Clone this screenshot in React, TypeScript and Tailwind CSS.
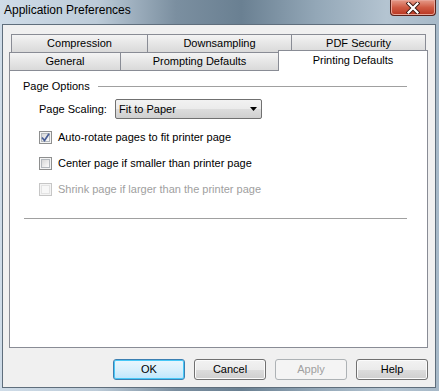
const tabBg = "bg-gradient-to-b from-[#f4f4f4] via-[#e6e6e6] to-[#d9d9d9]";

function Tab({ label, w, first }: { label: string; w: string; first?: boolean }) {
  return (
    <div
      className={`${w} h-full flex items-center justify-center border-t border-r border-[#898c95] ${
        first ? "border-l" : ""
      } ${tabBg} text-black`}
    >
      {label}
    </div>
  );
}

function Check({ checked, disabled }: { checked?: boolean; disabled?: boolean }) {
  return (
    <span
      className={`w-[13px] h-[13px] flex p-px border bg-[#f4f4f4] ${
        disabled ? "border-[#c6c6c6]" : "border-[#8e8f8f]"
      }`}
    >
      <span
        className={`flex-1 flex items-center justify-center border ${
          disabled
            ? "border-[#e3e3e3] bg-[#f7f7f7]"
            : "border-[#b3b8bd] bg-gradient-to-br from-[#d8d8d8] to-[#fbfbfb]"
        }`}
      >
        {checked && (
          <svg width="9" height="9" viewBox="0 0 9 9" className="-m-px">
            <path d="M1 4.5 L3.5 7.5 L8 0.8" fill="none" stroke="#4a5f97" strokeWidth="1.7" />
          </svg>
        )}
      </span>
    </span>
  );
}

function Btn({ label, def, disabled }: { label: string; def?: boolean; disabled?: boolean }) {
  const cls = disabled
    ? "border-[#adb2b5] bg-[#f4f4f4] text-[#a0a0a0]"
    : def
    ? "border-[#3c7fb1] bg-gradient-to-b from-[#eaf6fd] via-[#d9f0fc] to-[#bee6fd] text-black shadow-[inset_0_0_0_1px_#48c8f7]"
    : "border-[#707070] bg-[linear-gradient(#f2f2f2,#ebebeb_50%,#dddddd_50%,#cfcfcf)] text-black shadow-[inset_0_0_0_1px_#fbfbfb]";
  return (
    <div className={`w-[72px] h-[21px] flex items-center justify-center rounded-[3px] border ${cls}`}>
      {label}
    </div>
  );
}

export default function App() {
  return (
    <div className="relative w-[439px] h-[391px] overflow-hidden pt-[24px] pl-[2px] font-['Liberation_Sans',Arial,sans-serif] text-[11px] bg-[linear-gradient(90deg,#cfdce8_0%,#bccbd8_22%,#7b8fa0_40%,#6a8092_55%,#93a7b7_72%,#b4c4d1_88%,#a7b9c8_100%)]">
      {/* title bar */}
      <div className="absolute left-0 top-0 w-full h-[24px] pl-[4px] pt-[3px] text-[12px] leading-[14px] text-black">
        Application Preferences
      </div>
      <div className="absolute top-0 right-[3px] w-[46px] h-[16px] rounded-b-[4px] border border-t-0 border-[#5a2119] bg-gradient-to-b from-[#e59a89] via-[#cf5a43] to-[#b8341f] flex items-center justify-center shadow-[inset_0_0_0_1px_#e8a497]">
        <svg width="14" height="12" viewBox="0 0 14 12">
          <path d="M2.5 1.5 L11.5 10.5 M11.5 1.5 L2.5 10.5" stroke="#3a1510" strokeWidth="4" strokeLinecap="square" />
          <path d="M2.5 1.5 L11.5 10.5 M11.5 1.5 L2.5 10.5" stroke="#ffffff" strokeWidth="2.2" strokeLinecap="square" />
        </svg>
      </div>

      {/* client area */}
      <div className="w-[434px] h-[364px] border border-[#5f6e7c] bg-[#f0f0f0] pl-[6px] pt-[9px]">
        <div className="w-[419px]">
          <div className="flex h-[18px] ml-[2px]">
            <Tab label="Compression" w="w-[137px]" first />
            <Tab label="Downsampling" w="w-[144px]" />
            <Tab label="PDF Security" w="w-[134px]" />
          </div>
          <div className="flex h-[18px] items-start">
            <Tab label="General" w="w-[112px]" first />
            <div className={`w-[157px] h-full flex items-center justify-center border-t border-[#898c95] ${tabBg}`}>
              Prompting Defaults
            </div>
            <div className="relative z-10 -mt-[2px] w-[150px] h-[21px] pb-[2px] flex items-center justify-center border border-b-0 border-[#898c95] bg-white">
              Printing Defaults
            </div>
          </div>

          <div className="h-[278px] border border-[#898c95] bg-white pt-[8px] text-black">
            <div className="flex items-center pl-[13px] pr-[20px] h-[14px]">
              <span>Page Options</span>
              <span className="flex-1 ml-[8px] h-px bg-[#a0a0a0]" />
            </div>
            <div className="flex items-center mt-[6px] pl-[29px] h-[20px]">
              <span className="w-[76px]">Page Scaling:</span>
              <div className="w-[147px] h-[20px] flex items-center justify-between rounded-[2px] border border-[#707070] bg-[linear-gradient(#f2f2f2,#ebebeb_50%,#dddddd_50%,#cfcfcf)] pl-[3px] pr-[4px]">
                <span>Fit to Paper</span>
                <svg width="7" height="4" viewBox="0 0 7 4">
                  <path d="M0 0 H7 L3.5 4 Z" fill="#000" />
                </svg>
              </div>
            </div>
            <div className="flex flex-col gap-[13px] mt-[12px] pl-[29px]">
              <div className="flex items-center h-[13px]">
                <Check checked />
                <span className="ml-[6px]">Auto-rotate pages to fit printer page</span>
              </div>
              <div className="flex items-center h-[13px]">
                <Check />
                <span className="ml-[6px]">Center page if smaller than printer page</span>
              </div>
              <div className="flex items-center h-[13px]">
                <Check disabled />
                <span className="ml-[6px] text-[#a0a0a0]">Shrink page if larger than the printer page</span>
              </div>
            </div>
            <div className="mt-[22px] ml-[14px] mr-[20px] h-px bg-[#a0a0a0]" />
          </div>

          <div className="flex justify-end gap-[9px] mt-[11px]">
            <Btn label="OK" def />
            <Btn label="Cancel" />
            <Btn label="Apply" disabled />
            <Btn label="Help" />
          </div>
        </div>
      </div>
    </div>
  );
}
